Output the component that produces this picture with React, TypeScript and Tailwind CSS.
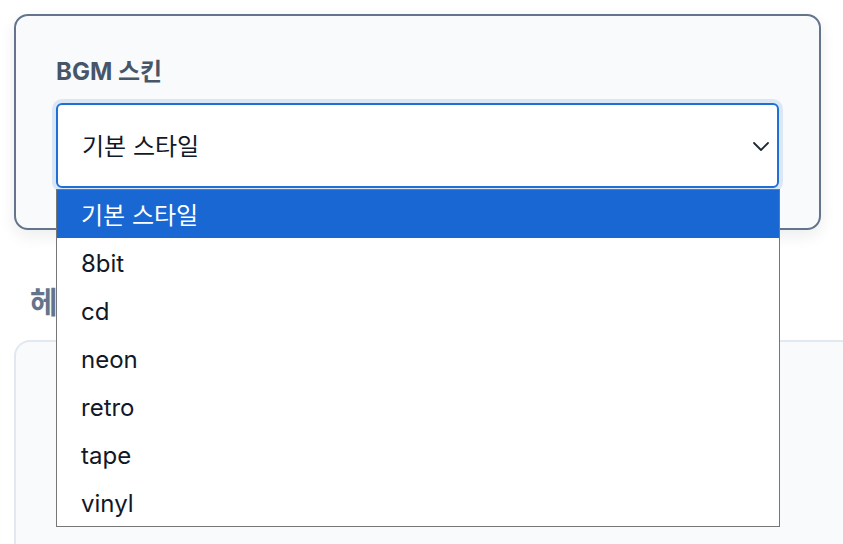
import React, { useState } from 'react';

const skins = ['기본 스타일', '8bit', 'cd', 'neon', 'retro', 'tape', 'vinyl'];

const font = { fontFamily: 'Inter, "Noto Sans CJK KR", sans-serif' };

const App: React.FC = () => {
  const [selected, setSelected] = useState(0);

  return (
    <div
      className="w-[843px] h-[544px] overflow-hidden bg-white px-[14px] pt-[14px]"
      style={font}
    >
      {/* Skin card */}
      <div className="relative w-[807px] rounded-[14px] border-2 border-[#64748b] bg-[#f8fafc] p-[40px] shadow-[0_6px_16px_rgba(15,23,42,0.08)]">
        <label className="block text-[24px] leading-[32px] font-bold text-[#475569] mb-[15px]">BGM 스킨</label>

        <div className="relative">
          <div className="flex h-[85px] items-center justify-between rounded-[6px] border-2 border-[#1f6fd6] bg-white pl-[24px] pr-[6px] ring-4 ring-[#dbe7f5]">
            <span className="pt-[3px] text-[24px] text-[#111827]">{skins[selected]}</span>
            <svg width="20" height="20" viewBox="0 0 20 20" fill="none">
              <path d="M3 7l7 7 7-7" stroke="#1f2937" strokeWidth="1.8" strokeLinecap="round" strokeLinejoin="round" />
            </svg>
          </div>

          {/* Open native-style option list */}
          <ul className="absolute left-0 top-[86px] z-20 w-[724px] border border-[#767676] bg-white">
            {skins.map((s, i) => (
              <li
                key={s}
                onClick={() => setSelected(i)}
                className={`flex h-[48px] items-center pl-[24px] pt-[3px] text-[24px] ${
                  i === selected ? 'bg-[#1967d2] text-white' : 'text-[#111827]'
                }`}
              >
                {s}
              </li>
            ))}
          </ul>
        </div>
      </div>

      {/* Next section */}
      <h2 className="mt-[54px] pl-[16px] text-[30px] leading-[36px] font-bold text-[#64748b]">헤더 설정</h2>
      <div className="mt-[20px] h-[300px] w-[870px] rounded-[16px] border-2 border-[#e2e8f0] bg-[#f8fafc]" />
    </div>
  );
};

export default App;
